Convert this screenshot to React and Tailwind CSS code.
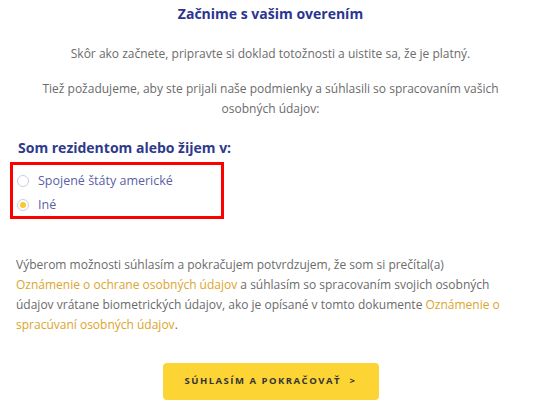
import React from "react";

const Radio = ({ checked, label }) => (
  <label className="flex items-center gap-[9px] leading-[20px]">
    <span className="w-[12px] h-[12px] rounded-full border-[1.5px] border-[#ccceE2] bg-white flex items-center justify-center">
      {checked && <span className="w-[6px] h-[6px] rounded-full bg-[#f7c92e]" />}
    </span>
    <span className="text-[#5b5fa6] text-[12.5px]">{label}</span>
  </label>
);

export default function App() {
  return (
    <div className="w-[541px] h-[409px] bg-white font-['Open_Sans',sans-serif] overflow-hidden">
      <h1 className="mt-[4px] text-center text-[14px] leading-[20px] font-bold text-[#2b3590]">
        Začnime s vašim overením
      </h1>

      <p className="mt-[20px] text-center text-[12px] leading-[20px] text-[#6b6b6b]">
        Skôr ako začnete, pripravte si doklad totožnosti a uistite sa, že je platný.
      </p>
      <p className="mt-[15px] mx-auto w-[470px] text-center text-[12px] leading-[20px] text-[#6b6b6b]">
        Tiež požadujeme, aby ste prijali naše podmienky a súhlasili so spracovaním vašich osobných údajov:
      </p>

      <h2 className="mt-[19px] pl-[18px] text-[14px] leading-[20px] font-bold text-[#2e3a8c]">
        Som rezidentom alebo žijem v:
      </h2>

      <div className="mt-[4px] ml-[10px] w-[214px] h-[57px] border-[3px] border-[#ff0000] pl-[4px] pt-[6px] flex flex-col gap-[4px]">
        <Radio label="Spojené štáty americké" />
        <Radio checked label="Iné" />
      </div>

      <p className="mt-[36px] px-[16px] text-[12px] leading-[20px] text-[#6b6b6b]">
        Výberom možnosti súhlasím a pokračujem potvrdzujem, že som si prečítal(a)
        <br />
        <a className="text-[#dba52c]">Oznámenie o ochrane osobných údajov</a> a súhlasím so
        spracovaním svojich osobných
        <br />
        údajov vrátane biometrických údajov, ako je opísané v tomto dokumente{" "}
        <a className="text-[#dba52c]">
          Oznámenie o
          <br />
          spracúvaní osobných údajov
        </a>
        .
      </p>

      <div className="mt-[28px] flex justify-center">
        <button className="w-[216px] h-[37px] rounded-[4px] bg-[#fcd535] flex items-center pl-[22px] pr-[22px] text-[9.5px] font-bold tracking-[1.5px] text-[#333] whitespace-nowrap">
          <span>SÚHLASÍM A POKRAČOVAŤ</span>
          <span className="ml-auto">&gt;</span>
        </button>
      </div>
    </div>
  );
}
